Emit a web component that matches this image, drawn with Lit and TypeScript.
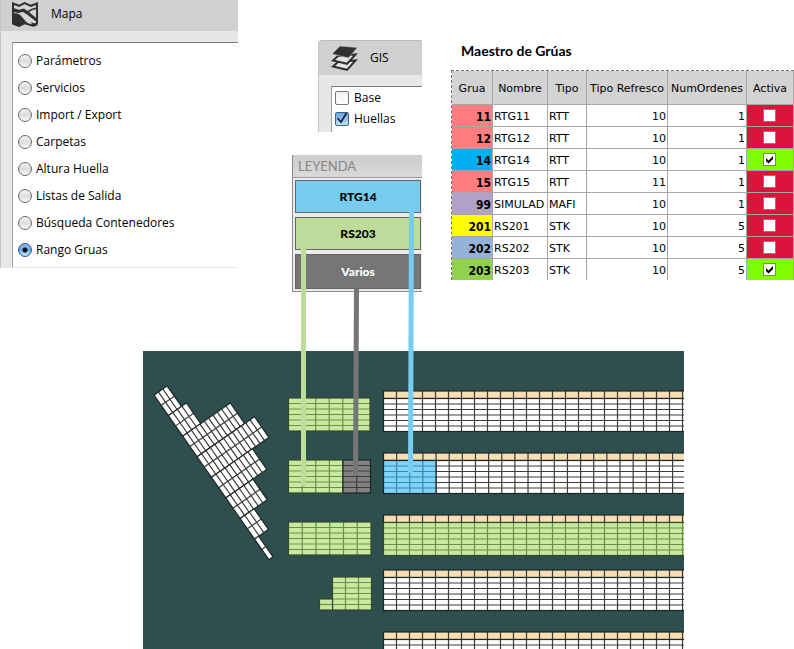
import { LitElement, html, svg, css } from "lit";
import { customElement, state } from "lit/decorators.js";

const MAP_OPTIONS = [
  "Parámetros",
  "Servicios",
  "Import / Export",
  "Carpetas",
  "Altura Huella",
  "Listas de Salida",
  "Búsqueda Contenedores",
  "Rango Gruas",
];

interface Crane {
  id: number;
  tone: string;
  name: string;
  type: string;
  refresh: number;
  orders: number;
  active: boolean;
}

const CRANES: Crane[] = [
  { id: 11, tone: "red", name: "RTG11", type: "RTT", refresh: 10, orders: 1, active: false },
  { id: 12, tone: "red", name: "RTG12", type: "RTT", refresh: 10, orders: 1, active: false },
  { id: 14, tone: "blue", name: "RTG14", type: "RTT", refresh: 10, orders: 1, active: true },
  { id: 15, tone: "red", name: "RTG15", type: "RTT", refresh: 11, orders: 1, active: false },
  { id: 99, tone: "purple", name: "SIMULAD", type: "MAFI", refresh: 10, orders: 1, active: false },
  { id: 201, tone: "yellow", name: "RS201", type: "STK", refresh: 10, orders: 5, active: false },
  { id: 202, tone: "steel", name: "RS202", type: "STK", refresh: 10, orders: 5, active: false },
  { id: 203, tone: "green", name: "RS203", type: "STK", refresh: 10, orders: 5, active: true },
];

/** Bands of the slanted block: number of slots and drawn width. */
const SLANTED: [number, number][] = [
  [3, 16],
  [4, 22],
  [11, 58],
  [13, 70],
  [9, 50],
  [6, 33],
  [3, 17],
  [1, 5],
];

/** Container yard seen from above, drawn at one unit per pixel. */
@customElement("yard-map")
export class YardMap extends LitElement {
  static styles = css`
    :host {
      display: block;
      overflow: hidden;
      background: #2f4f4f;
    }
    svg {
      display: block;
      width: 100%;
      height: 100%;
    }
    .plain { fill: #ffffff; }
    .sand { fill: #f8deb2; }
    .lime { fill: #c8eaa0; }
    .dark { fill: #828282; }
    .sky { fill: #7fd4fb; }
    .line { stroke: #3c3c38; stroke-width: 1.2; fill: none; }
    .lime-line { stroke: #6b8f4b; stroke-width: 1.2; fill: none; }
    .sky-line { stroke: #3f86a8; stroke-width: 1.2; fill: none; }
    .edge { stroke: #1c2626; stroke-width: 1.2; fill: none; }
    .lime-edge { stroke: #33482c; stroke-width: 1.2; fill: none; }
  `;

  private grid(x: number, y: number, w: number, h: number, cols: number, rows: number, fill: string, line: string) {
    let d = "";
    for (let c = 1; c < cols; c++) d += `M${x + (w * c) / cols} ${y}v${h}`;
    for (let r = 1; r < rows; r++) d += `M${x} ${y + (h * r) / rows}h${w}`;
    return svg`
      <rect class=${fill} x=${x} y=${y} width=${w} height=${h}></rect>
      <path class=${line} d=${d}></path>
      <rect class=${fill === "lime" ? "lime-edge" : "edge"} x=${x} y=${y} width=${w} height=${h}></rect>`;
  }

  /** A long block: one row of sand cells over six rows of slots. */
  private block(y: number, pitch: number, fill: string, line: string) {
    const cols = 60;
    return svg`
      ${this.grid(240.5, y, pitch * cols, 7.5, cols, 1, "sand", "line")}
      ${this.grid(240.5, y + 7.5, pitch * cols, 33, cols, 6, fill, line)}`;
  }

  render() {
    return html`<svg aria-hidden="true">
      ${this.block(40, 13, "plain", "line")}
      ${this.block(102, 13.14, "plain", "line")}
      ${this.grid(240.5, 109.5, 52.5, 33, 4, 6, "sky", "sky-line")}
      ${this.block(164, 13, "lime", "lime-line")}
      ${this.block(219, 13, "plain", "line")}
      ${this.block(281, 13, "plain", "line")}
      ${this.grid(145.5, 47, 81.5, 33, 6, 6, "lime", "lime-line")}
      ${this.grid(145.5, 109, 54.5, 33, 4, 6, "lime", "lime-line")}
      ${this.grid(200, 109, 27.5, 33, 2, 6, "dark", "line")}
      ${this.grid(145.5, 171, 82.5, 33, 6, 6, "lime", "lime-line")}
      ${this.grid(189.5, 226, 39, 33, 3, 6, "lime", "lime-line")}
      ${this.grid(176.5, 248, 13, 11, 1, 2, "lime", "lime-line")}
      <g transform="translate(11 44) rotate(-34.9)">
        ${SLANTED.map(([n, w], i) => this.grid(0, i * 25.1, w, 25.1, n, 2, "plain", "line"))}
      </g>
    </svg>`;
  }
}

@customElement("app-root")
export class AppRoot extends LitElement {
  static styles = css`
    :host {
      display: block;
      background: #fff;
      color: #000;
      font: 12px/16px "Open Sans", "Noto Sans", sans-serif;
    }
    * { box-sizing: border-box; }
    .page {
      position: relative;
      display: flex;
      flex-direction: column;
      min-height: 100vh;
    }
    .top {
      display: flex;
      align-items: flex-start;
    }
    .panel {
      background: #e7e7e7;
      border-left: 1px solid #c6c6c6;
    }
    .bar {
      display: flex;
      align-items: center;
      background: #d0d0d0;
    }
    .bar svg { display: block; }
    .title { margin: 0; font-size: 12px; font-weight: 400; }
    .map-panel { flex: 0 0 238px; padding-bottom: 1px; }
    .map-panel .bar { height: 31px; padding: 0 0 3px 10px; gap: 12px; }
    .box {
      margin: 0;
      background: #fff;
      border: 0 solid #7a7a7a;
      border-top-width: 1px;
      border-left: 1px solid #a0a0a0;
    }
    .map-panel .box {
      display: flex;
      flex-direction: column;
      gap: 11px;
      margin: 11px 0 0 11px;
      padding: 10px 5px 9px;
    }
    .option {
      display: flex;
      align-items: center;
      gap: 4px;
      height: 16px;
      white-space: nowrap;
    }
    input { appearance: none; margin: 0; flex: none; }
    .radio {
      width: 14px;
      height: 14px;
      border: 1px solid #686868;
      border-radius: 50%;
      background: linear-gradient(#f4f4f4, #dcdcdc 50%, #fafafa);
    }
    .radio:checked {
      border-color: #2c4f86;
      background:
        radial-gradient(circle, #0c1420 2px, transparent 3px),
        linear-gradient(#8fb8ea, #6aa8e4 50%, #c4ecff);
    }
    .side { flex: 0 0 130px; margin-left: 54px; padding-top: 40px; }
    .gis { margin-left: 26px; height: 92px; border-top-left-radius: 4px; }
    .gis .bar { height: 35px; padding-left: 12px; gap: 12px; border-top: 1px solid #bcbcbc; border-top-left-radius: 4px; }
    .gis .box {
      display: flex;
      flex-direction: column;
      gap: 5px;
      height: 46px;
      margin: 11px 0 0 12px;
      padding: 3px;
    }
    .gis .option { gap: 5px; }
    .tick {
      width: 14px;
      height: 14px;
      border: 1px solid #777;
      border-radius: 2px;
      background: linear-gradient(#f2f2f2, #fff);
    }
    .tick-wrap { position: relative; display: flex; }
    .tick-wrap svg { position: absolute; left: 0; bottom: 1px; pointer-events: none; }
    .tick:checked {
      border-color: #3a5f96;
      background: linear-gradient(#6da6e4, #b8e2ff);
    }
    .legend {
      margin-top: 23px;
      background: #ececec;
      border-left: 1px solid #8c8c8c;
      border-bottom: 1px solid #8c8c8c;
      font-family: "Lato", "Open Sans", sans-serif;
    }
    .legend-title {
      margin: 0;
      height: 23px;
      padding-left: 5px;
      border-bottom: 1px solid #9a9a9a;
      background: linear-gradient(#cccccc, #dadada);
      color: #868686;
      font-size: 13px;
      font-weight: 400;
      line-height: 22px;
    }
    .keys {
      display: flex;
      flex-direction: column;
      gap: 4px;
      margin: 0;
      padding: 2px 1px 2px 2px;
      list-style: none;
    }
    .key {
      height: 33px;
      border: 1px solid #666;
      font-weight: 900;
      font-size: 12px;
      line-height: 31px;
      text-align: center;
    }
    .key-sky { background: #77ccef; }
    .key-lime { background: #bddc9c; }
    .key-dark { background: #767676; color: #fff; height: 35px; line-height: 33px; }
    .master { flex: 1 1 auto; min-width: 0; margin-left: 29px; padding-top: 40px; }
    .heading { margin: 0 0 8px 10px; font: 700 14px/22px "Lato", "Open Sans", sans-serif; }
    table {
      width: 100%;
      table-layout: fixed;
      border-collapse: separate;
      border-spacing: 0;
      border-top: 1px dashed #707070;
      border-left: 1px dashed #707070;
      font: 11px/14px "DejaVu Sans", sans-serif;
    }
    th, td {
      padding: 2px 1px 0;
      border-right: 1px solid #a6a6a6;
      border-bottom: 1px solid #a6a6a6;
      white-space: nowrap;
    }
    thead th { height: 34px; background: #d3d3d3; font-weight: 400; }
    tbody th, td { height: 22px; }
    tbody tr:last-child > * { border-bottom: 0; height: 21px; }
    tbody th { text-align: right; font: 700 12px/14px "DejaVu Sans Condensed", "DejaVu Sans", sans-serif; }
    .c-id { width: 41px; }
    .c-name { width: 55px; }
    .c-type { width: 39px; }
    .c-refresh { width: 81px; }
    .c-orders { width: 79px; }
    .c-active { width: 47px; }
    .num { text-align: right; }
    .state { padding: 0 2px 0 0; background: #dc143c; }
    .state.on { background: #7fff00; }
    .flag { position: relative; display: flex; width: 13px; margin: 0 auto; }
    .flag svg { position: absolute; inset: 0; pointer-events: none; }
    .flag input { width: 13px; height: 13px; border: 1px solid #808080; background: #fff; }
    .red { background: #ff7c80; }
    .blue { background: #00b0f0; }
    .purple { background: #b1a0c7; }
    .yellow { background: #ffff00; }
    .steel { background: #95b3d7; }
    .green { background: #92d050; }
    yard-map { flex: 1 0 298px; height: 298px; margin: 59px 110px 0 143px; }
    .links {
      position: absolute;
      left: 292px;
      top: 212px;
      width: 130px;
      height: 276px;
      pointer-events: none;
    }
    .link { fill: none; stroke-width: 5; }
    .link-lime { stroke: #bddc9c; }
    .link-dark { stroke: #767676; }
    .link-sky { stroke: #77ccef; }
  `;

  @state() private selected = "Rango Gruas";

  private renderMapPanel() {
    return html`<section class="panel map-panel">
      <header class="bar">
        <svg width="28" height="28" viewBox="0 0 28 28" aria-hidden="true">
          <path d="M2 3.500 8 5.800 13.500 3 20 5.800 26 3.500V23.500L21 25.500 13.500 23 8 26 2 23.500z" fill="#d6d6d6" stroke="#303030" stroke-width="2"></path>
          <path d="M1 13.500C6 12.500 9 14 11 17L18 25 13.500 24 8 26.800 1 24z" fill="#303030"></path>
          <path d="M2 8 8 9.800 13 8.500 18 12 27 19.500V23L16 14.500 12 12 7 13 1 11.500z" fill="#303030"></path>
          <path d="M17 11.500 21 9.500 26 8" fill="none" stroke="#303030" stroke-width="1.600"></path>
          <path d="M20 22 27 25 22 27z" fill="#303030"></path>
        </svg>
        <h2 class="title">Mapa</h2>
      </header>
      <div class="box" role="radiogroup" aria-label="Mapa">
        ${MAP_OPTIONS.map(
          (name) => html`<label class="option">
            <input class="radio" type="radio" name="layer" .checked=${this.selected === name}
              @change=${() => (this.selected = name)} />
            <span>${name}</span>
          </label>`
        )}
      </div>
    </section>`;
  }

  private renderGis() {
    return html`<section class="panel gis">
      <header class="bar">
        <svg width="27" height="27" viewBox="0 0 27 27" aria-hidden="true">
          <path d="M2 21.500 7 17 24.500 15.500 16 24.800z" fill="#e4e4e4" stroke="#303030" stroke-width="2"></path>
          <path d="M2 15.500 7 11 24.500 9.500 16 18.800z" fill="#e4e4e4" stroke="#303030" stroke-width="2"></path>
          <path d="M1 9 9 1 26.500 2.500 17.500 13z" fill="#303030" stroke="#d0d0d0" stroke-width="0.600"></path>
        </svg>
        <h2 class="title">GIS</h2>
      </header>
      <div class="box">
        <label class="option"><input class="tick" type="checkbox" /><span>Base</span></label>
        <label class="option">
          <span class="tick-wrap">
            <input class="tick" type="checkbox" checked />
            <svg width="14" height="14" viewBox="0 0 14 14" aria-hidden="true">
              <path d="M2.500 7 6 11 11.500 2" fill="none" stroke="#1c2430" stroke-width="1.800"></path>
            </svg>
          </span>
          <span>Huellas</span>
        </label>
      </div>
    </section>`;
  }

  private renderTable() {
    return html`<section class="master">
      <h1 class="heading">Maestro de Grúas</h1>
      <table>
        <thead>
          <tr>
            <th class="c-id" scope="col">Grua</th>
            <th class="c-name" scope="col">Nombre</th>
            <th class="c-type" scope="col">Tipo</th>
            <th class="c-refresh" scope="col">Tipo Refresco</th>
            <th class="c-orders" scope="col">NumOrdenes</th>
            <th class="c-active" scope="col">Activa</th>
          </tr>
        </thead>
        <tbody>
          ${CRANES.map(
            (c) => html`<tr>
              <th class=${c.tone} scope="row">${c.id}</th>
              <td>${c.name}</td>
              <td>${c.type}</td>
              <td class="num">${c.refresh}</td>
              <td class="num">${c.orders}</td>
              <td class="state ${c.active ? "on" : ""}">
                <label class="flag">
                  <input type="checkbox" aria-label="Activa ${c.name}" .checked=${c.active} />
                  ${c.active
                    ? html`<svg width="13" height="13" viewBox="0 0 13 13" aria-hidden="true">
                        <path d="M3 5v3l2.500 2.500L10 6V3L5.500 7.500z" fill="#000"></path>
                      </svg>`
                    : ""}
                </label>
              </td>
            </tr>`
          )}
        </tbody>
      </table>
    </section>`;
  }

  render() {
    return html`<main class="page">
      <div class="top">
        ${this.renderMapPanel()}
        <div class="side">
          ${this.renderGis()}
          <section class="legend">
            <h2 class="legend-title">LEYENDA</h2>
            <ul class="keys">
              <li class="key key-sky">RTG14</li>
              <li class="key key-lime">RS203</li>
              <li class="key key-dark">Varios</li>
            </ul>
          </section>
        </div>
        ${this.renderTable()}
      </div>
      <yard-map></yard-map>
      <svg class="links" aria-hidden="true">
        <path class="link link-lime" d="M11.500 37V274"></path>
        <path class="link link-dark" d="M64.500 77 63.500 264"></path>
        <path class="link link-sky" d="M119.500 0 118.500 261"></path>
      </svg>
    </main>`;
  }
}
